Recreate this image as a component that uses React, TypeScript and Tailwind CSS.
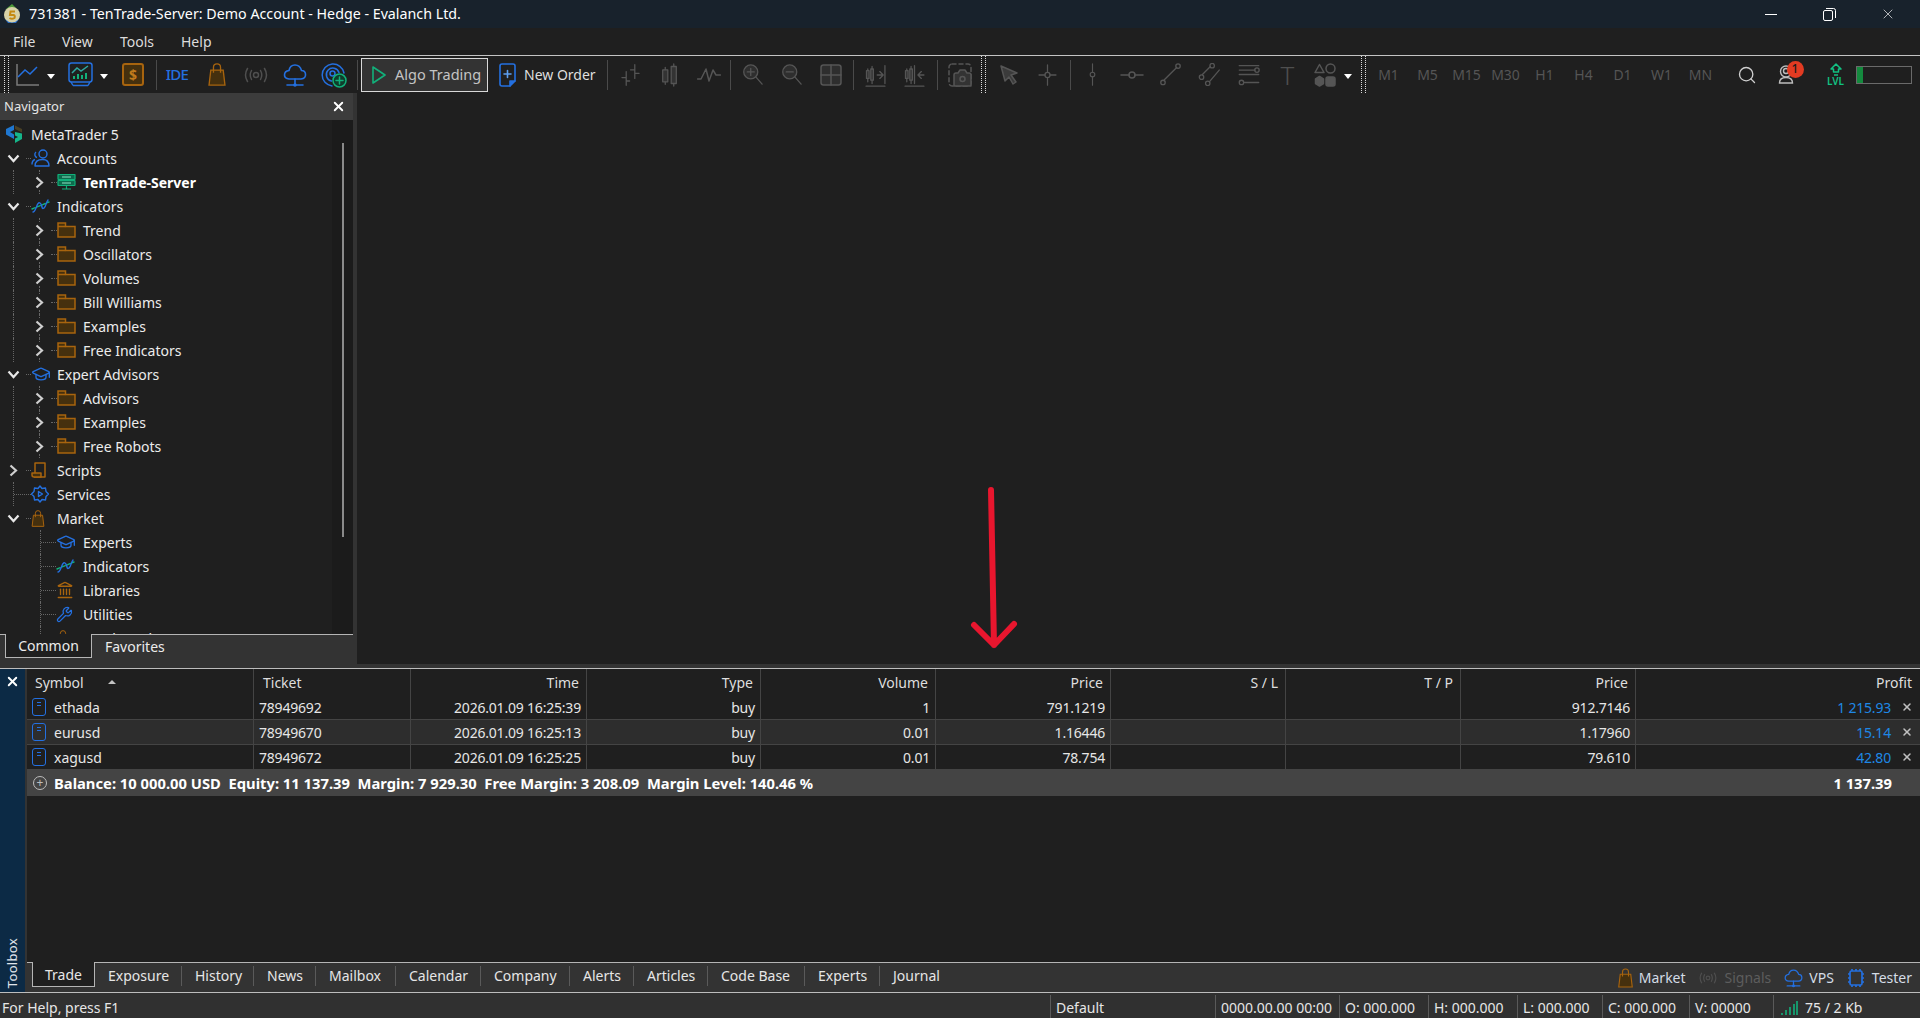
import type { ReactNode } from "react";
import { GraduationCap, Landmark, Search, Wrench, X } from "lucide-react";

const BLUE = "#2470e0";
const ORANGE = "#a8640e";
const ORANGE_FILL = "#45300e";
const GREEN = "#12b07a";
const GRAY = "#555555";

type IconProps = { w?: number; h?: number; c?: string };

function Svg({ w = 24, h = 24, vb = "0 0 24 24", c = GRAY, sw = 1.5, children }: IconProps & { vb?: string; sw?: number; children: ReactNode }) {
  return (
    <svg width={w} height={h} viewBox={vb} fill="none" stroke={c} strokeWidth={sw} strokeLinecap="round" strokeLinejoin="round">
      {children}
    </svg>
  );
}

function AppIcon() {
  return (
    <svg width="20" height="20" viewBox="0 0 20 20">
      <path d="M10 0 L15 5 L4 5 Z" fill="#4d9a3a" />
      <circle cx="10" cy="11" r="8" fill="#d8d2a8" />
      <path d="M3 15 Q10 22 17 15 L14 19 L6 19 Z" fill="#2a6fc9" />
      <path d="M13 7.5 H8.5 L8 11 H11.5 Q13.5 11.5 12.5 14 Q10 15.5 7.5 14" fill="none" stroke="#c58a12" strokeWidth="2" />
    </svg>
  );
}

function LineChartIcon() {
  return (
    <svg width="24" height="24" viewBox="0 0 24 24" fill="none" strokeWidth="1.5">
      <path d="M1 1 V22 H23" stroke="#7b7b7b" />
      <path d="M2 14 L9 7 L14 11 L21 4" stroke={BLUE} />
    </svg>
  );
}

function ChartBlueIcon() {
  return (
    <svg width="25" height="25" viewBox="0 0 25 25" fill="none" strokeWidth="1.5">
      <rect x="1" y="1" width="23" height="19" rx="2.5" stroke={BLUE} />
      <path d="M5 23.5 H20 M3 20 L5 23.5 M22 20 L20 23.5" stroke={BLUE} />
      <path d="M4 11 L9 6 L13 9 L20 4" stroke="#2fa9a0" />
      <path d="M6 17 V14 M10 17 V12 M14 17 V13 M18 17 V11" stroke={GREEN} strokeWidth="2" />
    </svg>
  );
}

function DollarIcon() {
  return (
    <div className="flex h-[23px] w-[22px] items-center justify-center rounded-[3px] border-2 border-[#a8640e] bg-[#45300e] text-[14px] font-bold leading-none text-[#c27a1c]">
      $
    </div>
  );
}

function BagIcon({ w = 18, h = 23 }: IconProps) {
  return (
    <svg width={w} height={h} viewBox="0 0 20 26" fill="none" stroke={ORANGE} strokeWidth="1.5">
      <path d="M3 8 H17 L19 25 H1 Z" fill={ORANGE_FILL} />
      <path d="M6 11 V5 Q6 1 10 1 Q14 1 14 5 V11" />
    </svg>
  );
}

function SignalIcon({ w = 24, h = 16, c = "#4f4f4f" }: IconProps) {
  return (
    <svg width={w} height={h} viewBox="0 0 24 16" fill="none" stroke={c} strokeWidth="1.5" strokeLinecap="round">
      <circle cx="12" cy="8" r="2.5" />
      <path d="M7.5 3.5 Q5 8 7.5 12.5 M16.5 3.5 Q19 8 16.5 12.5 M3.5 1.5 Q-0.5 8 3.5 14.5 M20.5 1.5 Q24.5 8 20.5 14.5" />
    </svg>
  );
}

function CloudIcon({ w = 24, h = 24 }: IconProps) {
  return (
    <svg width={w} height={h} viewBox="0 0 24 24" fill="none" stroke={BLUE} strokeWidth="1.6" strokeLinecap="round" strokeLinejoin="round">
      <path d="M6 16 H18 Q23 15.5 22.5 11 Q22 7.5 18.5 7.5 Q17 2 12 2 Q7 2 6 7.5 Q1.5 8 1.5 12 Q1.5 15.5 6 16 Z" />
      <path d="M12 16 V22 M4 22 H20" />
      <circle cx="12" cy="22" r="1" fill={BLUE} />
    </svg>
  );
}

function RadarIcon() {
  return (
    <svg width="26" height="26" viewBox="0 0 26 26" fill="none" strokeWidth="1.5" strokeLinecap="round">
      <path d="M11 24 A11 11 0 1 1 23 11" stroke={BLUE} />
      <path d="M10.5 19 A6.5 6.5 0 1 1 18 10.5" stroke={BLUE} />
      <circle cx="11.5" cy="11.5" r="2.5" stroke={BLUE} />
      <circle cx="18.5" cy="18.5" r="6.5" fill="#0f3d2c" stroke={GREEN} />
      <path d="M18.5 15 V22 M15 18.5 H22" stroke={GREEN} />
    </svg>
  );
}

function PlayIcon() {
  return (
    <svg width="14" height="18" viewBox="0 0 14 18" fill="none" stroke={GREEN} strokeWidth="1.6" strokeLinejoin="round">
      <path d="M1 1 L13 9 L1 17 Z" />
    </svg>
  );
}

function NewOrderIcon() {
  return (
    <svg width="17" height="24" viewBox="0 0 17 24" fill="none" stroke={BLUE} strokeWidth="1.6" strokeLinejoin="round" strokeLinecap="round">
      <path d="M3 1 H14 Q16 1 16 3 V18 L11 23 H3 Q1 23 1 21 V3 Q1 1 3 1 Z" />
      <path d="M11 23 V18 H16" fill={BLUE} />
      <path d="M8.5 7.5 V14.5 M5 11 H12" stroke="#5d9ff0" />
    </svg>
  );
}

function UserIcon() {
  return (
    <svg width="16" height="20" viewBox="0 0 16 20" fill="none" stroke="#bdbdbd" strokeWidth="1.4">
      <circle cx="8" cy="6.5" r="5.5" />
      <circle cx="8" cy="6" r="2.5" />
      <path d="M1.5 18 Q1.5 12.5 8 12.5 Q14.5 12.5 14.5 18 Z" />
    </svg>
  );
}

function LvlIcon() {
  return (
    <div className="flex flex-col items-center leading-none text-[#12c283]">
      <svg width="12" height="13" viewBox="0 0 12 13" fill="none" stroke="currentColor" strokeWidth="1.5" strokeLinejoin="round">
        <path d="M6 1 L11 6 H8.5 V9 H3.5 V6 H1 Z" />
        <path d="M4 12 H8" />
      </svg>
      <span className="text-[10px] font-semibold">LVL</span>
    </div>
  );
}

function FolderIcon() {
  return (
    <svg width="19" height="16" viewBox="0 0 19 16" fill={ORANGE_FILL} stroke={ORANGE} strokeWidth="1.5">
      <path d="M1 1 H8.5 V4.5 H18 V15 H1 Z" />
      <path d="M1 4.5 H8.5" />
    </svg>
  );
}

function AccountsIcon() {
  return (
    <svg width="19" height="18" viewBox="0 0 19 18" fill="none" stroke={BLUE} strokeWidth="1.4" strokeLinejoin="round">
      <circle cx="12" cy="5" r="4" />
      <path d="M6 8.5 A3.2 3.2 0 0 1 5 3" />
      <path d="M4 17 Q4 10.5 11.5 10.5 Q18 10.5 18 17 Z" />
      <path d="M1 15.5 Q1 11.5 4 10.5" />
    </svg>
  );
}

function ServerIcon() {
  return (
    <svg width="19" height="16" viewBox="0 0 19 16" strokeWidth="1.2">
      <rect x="1" y="0.5" width="17" height="5" rx="0.5" fill="#0d6c4d" stroke={GREEN} />
      <rect x="1" y="6.5" width="17" height="5" rx="0.5" fill="#0d6c4d" stroke={GREEN} />
      <path d="M5 3 H14 M5 9 H14" stroke="#8fe0c3" strokeWidth="1" />
      <path d="M9.5 11.5 V14.5 M5 15 H14" stroke={GREEN} />
    </svg>
  );
}

function IndicatorIcon() {
  return (
    <svg width="19" height="16" viewBox="0 0 19 16" fill="none" strokeWidth="1.4" strokeLinecap="round">
      <path d="M1 11 L18 4" stroke={GREEN} strokeDasharray="3.5 2" />
      <path d="M2 14 C5 14 6 3 9 5 C12 7 10 12 13 10 C15 9 15 4 17 2" stroke={BLUE} />
    </svg>
  );
}

function ScriptIcon() {
  return (
    <svg width="15" height="16" viewBox="0 0 15 16" fill="none" stroke={ORANGE} strokeWidth="1.5" strokeLinejoin="round">
      <path d="M4 11 V1 H14 V15 H3" />
      <path d="M1 11 H10 V15 H3 Q1 15 1 13 Z" fill={ORANGE_FILL} />
    </svg>
  );
}

function ServicesIcon() {
  return (
    <svg width="18" height="18" viewBox="0 0 18 18" fill="none" stroke={BLUE} strokeWidth="1.4" strokeLinejoin="round">
      <path d="M9 1 L11 3.5 L14.5 3 L15 6.5 L17.5 9 L15 11.5 L14.5 15 L11 14.5 L9 17 L7 14.5 L3.5 15 L3 11.5 L0.5 9 L3 6.5 L3.5 3 L7 3.5 Z" />
      <path d="M7.5 6.5 L11.5 9 L7.5 11.5 Z" />
    </svg>
  );
}

function LogoIcon() {
  return (
    <svg width="18" height="18" viewBox="0 0 18 18">
      <path d="M1 4 L9 0 V5 L5 7 L9 9.5 V14 L1 9.5 Z" fill="#1f77d0" />
      <path d="M10 0.5 L17 4 V7.5 L10 4 Z" fill="#4a4024" />
      <path d="M17 8.5 V14 L10 18 V13.5 L13 12 L10 10.5 V7 Z" fill="#16b58a" />
    </svg>
  );
}

function TradeDoc() {
  return (
    <div className="flex h-[18px] w-[14px] flex-col items-center gap-[2px] rounded-[3px] border-[1.5px] border-[#2470e0] pt-[3px]">
      <div className="h-px w-[4px] bg-[#2470e0]" />
      <div className="h-px w-[4px] bg-[#2470e0]" />
    </div>
  );
}

function ChipIcon() {
  return (
    <svg width="18" height="20" viewBox="0 0 18 20" fill="none" stroke={BLUE} strokeWidth="1.7">
      <rect x="3" y="3" width="12" height="14" rx="1.5" />
      <path d="M5 1 V3 M9 1 V3 M13 1 V3 M5 17 V19 M9 17 V19 M13 17 V19 M1 6 H3 M1 10 H3 M1 14 H3 M15 6 H17 M15 10 H17 M15 14 H17" />
    </svg>
  );
}

function RightChev() {
  return (
    <svg width="9" height="13" viewBox="0 0 9 13" fill="none" stroke="#cfcfcf" strokeWidth="2.2">
      <path d="M1.5 1.5 L7 6.5 L1.5 11.5" />
    </svg>
  );
}

function DownChev() {
  return (
    <svg width="13" height="9" viewBox="0 0 13 9" fill="none" stroke="#e8e8e8" strokeWidth="2.2">
      <path d="M1.5 1.5 L6.5 7 L11.5 1.5" />
    </svg>
  );
}

function Caret({ className }: { className: string }) {
  return (
    <div className={`flex h-full items-center justify-center ${className}`}>
      <div className="mt-[3px] h-0 w-0 border-x-[4px] border-t-[5px] border-x-transparent border-t-white" />
    </div>
  );
}

function Grip({ className }: { className: string }) {
  return <div className={`h-full w-[5px] border-x border-dotted border-[#dddddd] ${className}`} />;
}

function Sep({ className }: { className: string }) {
  return <div className={`h-[30px] w-px bg-[#4a4a4a] ${className}`} />;
}

function Cell({ className = "w-[39px]", children }: { className?: string; children: ReactNode }) {
  return <div className={`flex h-full shrink-0 items-center justify-center ${className}`}>{children}</div>;
}

function Toolbar() {
  return (
    <div className="flex h-[37px] items-center bg-[#1f1f1f]">
      <Grip className="ml-[4px]" />
      <Cell className="w-[38px]"><LineChartIcon /></Cell>
      <Caret className="w-[8px]" />
      <Cell className="ml-[7px] w-[36px]"><ChartBlueIcon /></Cell>
      <Caret className="w-[8px] ml-[2px]" />
      <Cell className="ml-[6px] w-[38px]"><DollarIcon /></Cell>
      <Sep className="ml-[4px]" />
      <Cell className="w-[40px]"><span className="text-[15px] font-medium tracking-tighter text-[#2470e0]">IDE</span></Cell>
      <Cell><BagIcon /></Cell>
      <Cell><SignalIcon /></Cell>
      <Cell><CloudIcon /></Cell>
      <Cell className="w-[40px]"><RadarIcon /></Cell>
      <Sep className="ml-[3px]" />
      <div className="ml-[3px] flex h-[34px] w-[127px] items-center border border-[#d8d8d8] bg-[#333333] pl-[10px]">
        <PlayIcon />
        <span className="ml-[9px] whitespace-nowrap text-[14.5px] text-[#c4c4c4]">Algo Trading</span>
      </div>
      <div className="ml-[11px] flex w-[108px] items-center">
        <NewOrderIcon />
        <span className="ml-[8px] whitespace-nowrap text-[14px] text-[#dedede]">New Order</span>
      </div>
      <Sep className="" />
      <Cell className="ml-[3px] w-[39px]">
        <Svg w={19} h={24} vb="0 0 22 28"><path d="M6 10 V26 M1 17 H6 M6 21 H10 M16 2 V18 M11 8 H16 M16 12 H21" /></Svg>
      </Cell>
      <Cell>
        <Svg w={17} h={24} vb="0 0 20 28">
          <path d="M5 5 V8 M5 22 V25 M15 1 V4 M15 24 V27" />
          <rect x="2" y="8" width="6" height="14" fill="#333" />
          <rect x="12" y="4" width="6" height="20" fill="#333" />
        </Svg>
      </Cell>
      <Cell>
        <Svg w={24} h={18} vb="0 0 24 18"><path d="M0.5 13 H4 L9 3 L12 15 L16 4 L19 9 H23.5" /></Svg>
      </Cell>
      <Sep className="ml-[2px]" />
      <Cell className="ml-[2px] w-[39px]">
        <Svg w={21} h={23} vb="0 0 24 26"><circle cx="10" cy="10" r="8" fill="#2e2e2e" /><path d="M10 6 V14 M6 10 H14 M16 16 L23 24" /></Svg>
      </Cell>
      <Cell>
        <Svg w={21} h={23} vb="0 0 24 26"><circle cx="10" cy="10" r="8" fill="#2e2e2e" /><path d="M6 10 H14 M16 16 L23 24" /></Svg>
      </Cell>
      <Cell>
        <Svg w={22} h={22} vb="0 0 22 22"><rect x="1" y="1" width="20" height="20" rx="2.5" fill="#2e2e2e" /><path d="M11 1 V21 M1 11 H21" /></Svg>
      </Cell>
      <Sep className="ml-[3px]" />
      <Cell className="ml-[2px] w-[39px]">
        <Svg w={23} h={24} vb="0 0 24 28">
          <path d="M3 7 V22 M8 4 V24 M23 3 V24 M1 27 H23 M14 14 H21 M17 10 L21 14 L17 18" />
          <rect x="1.5" y="9" width="3" height="9" fill="#333" />
          <rect x="6.5" y="7" width="3" height="13" fill="#333" />
        </Svg>
      </Cell>
      <Cell>
        <Svg w={23} h={24} vb="0 0 24 28">
          <path d="M3 7 V22 M8 4 V24 M12 3 V24 M1 27 H23 M16 14 H23 M20 10 L16 14 L20 18" />
          <rect x="1.5" y="9" width="3" height="9" fill="#333" />
          <rect x="6.5" y="7" width="3" height="13" fill="#333" />
        </Svg>
      </Cell>
      <Sep className="ml-[3px]" />
      <Cell className="ml-[2px] w-[39px]">
        <Svg w={24} h={24} vb="0 0 24 24">
          <rect x="1" y="1" width="22" height="22" rx="3" strokeDasharray="4 3" />
          <path d="M6 23 V12 Q6 10 8 10 H10 L12 7 H17 L19 10 H21 Q23 10 23 12 V23 Z" fill="#333" />
          <circle cx="14.5" cy="16" r="2.5" />
        </Svg>
      </Cell>
      <Grip className="ml-[2px]" />
      <Cell className="ml-[3px] w-[39px]">
        <Svg w={18} h={20} vb="0 0 18 20"><path d="M1 1 L17 8 L11 10 L16 17 L13 19 L9 12 L5 16 Z" fill="#3b3b3b" /></Svg>
      </Cell>
      <Cell>
        <Svg w={21} h={22} vb="0 0 22 26"><path d="M11 1 V10 M11 16 V25 M1 13 H8 M14 13 H21" /><circle cx="11" cy="13" r="3" /></Svg>
      </Cell>
      <Sep className="ml-[3px]" />
      <Cell className="ml-[2px] w-[39px]">
        <Svg w={7} h={23} vb="0 0 8 30"><path d="M4 1 V12 M4 18 V29" /><circle cx="4" cy="15" r="3" /></Svg>
      </Cell>
      <Cell>
        <Svg w={24} h={8} vb="0 0 24 8"><path d="M1 4 H9 M15 4 H23" /><circle cx="12" cy="4" r="3" /></Svg>
      </Cell>
      <Cell>
        <Svg w={23} h={23} vb="0 0 24 26"><path d="M5 19 L19 5" /><circle cx="3.5" cy="22" r="2.5" /><circle cx="20.5" cy="3.5" r="2.5" /></Svg>
      </Cell>
      <Cell>
        <Svg w={23} h={23} vb="0 0 24 26"><path d="M4 13 L13 4 M12 21 L23 8" /><circle cx="3" cy="16" r="2.5" /><circle cx="15" cy="3" r="2.5" /><circle cx="10" cy="23" r="2.5" /></Svg>
      </Cell>
      <Cell>
        <Svg w={24} h={23} vb="0 0 24 26"><path d="M1 3 H23 M1 8 H19 M1 13 H23 M7 22 H23" /><circle cx="21" cy="8" r="2.5" /><circle cx="3.5" cy="22" r="2.5" /></Svg>
      </Cell>
      <Cell><span className="text-[26px] font-light leading-none text-[#4f4f4f]">T</span></Cell>
      <Cell className="w-[36px]">
        <Svg w={22} h={24} vb="0 0 22 24">
          <path d="M5.5 1.5 L10 9.5 H1 Z" />
          <circle cx="16.5" cy="5.5" r="4.5" />
          <path d="M5.5 13.5 L9.5 16 V20.5 L5.5 23 L1.5 20.5 V16 Z" fill="#555" />
          <rect x="12" y="14" width="9" height="9" rx="2" fill="#555" />
        </Svg>
      </Cell>
      <Caret className="w-[10px]" />
      <Grip className="ml-[8px]" />
      <div className="ml-[3px] flex h-full">
        {["M1", "M5", "M15", "M30", "H1", "H4", "D1", "W1", "MN"].map((t) => (
          <Cell key={t}><span className="text-[14px] text-[#555555]">{t}</span></Cell>
        ))}
      </div>
      <Cell className="ml-[7px] w-[39px]"><Search size={20} color="#d0d0d0" strokeWidth={1.6} /></Cell>
      <Cell>
        <div className="relative flex">
          <UserIcon />
          <div className="absolute -right-[10px] -top-[4px] flex h-[17px] w-[17px] items-center justify-center rounded-full bg-[#e23b22] text-[12px] font-medium leading-none text-[#1a1a1a]">
            1
          </div>
        </div>
      </Cell>
      <Cell className="ml-[11px] w-[39px]"><LvlIcon /></Cell>
      <div className="ml-[1px] h-[18px] w-[56px] border border-[#6a6a6a]">
        <div className="h-full w-[6px] bg-[#148a3e]" />
      </div>
    </div>
  );
}

type Row = { label: string; icon: ReactNode; bold?: boolean };

function Label({ row }: { row: Row }) {
  return <span className={`whitespace-nowrap text-[14px] text-[#ececec] ${row.bold ? "font-bold text-white" : ""}`}>{row.label}</span>;
}

function TopRow({ row, open, closed, tail }: { row: Row; open?: boolean; closed?: boolean; tail?: boolean }) {
  return (
    <div className="flex h-6 items-center">
      {tail ? (
        <div className="h-full w-[14px] border-r border-dotted border-[#666666]" />
      ) : (
        <div className="flex w-[26px] items-center justify-center">{open ? <DownChev /> : closed ? <RightChev /> : null}</div>
      )}
      {tail ? <div className="w-[17px] border-t border-dotted border-[#666666]" /> : <div className="w-[5px] border-t border-dotted border-[#666666]" />}
      <div className="flex w-[26px] items-center">{row.icon}</div>
      <Label row={row} />
    </div>
  );
}

function SubRow({ row, guide = true }: { row: Row; guide?: boolean }) {
  return (
    <div className="flex h-6 items-center">
      <div className="h-full w-[27px]">{guide && <div className="h-full w-[14px] border-r border-dotted border-[#666666]" />}</div>
      <div className="flex h-full w-[24px] flex-col items-center justify-between">
        <div className="h-[4px] border-l border-dotted border-[#666666]" />
        <RightChev />
        <div className="h-[4px] border-l border-dotted border-[#666666]" />
      </div>
      <div className="w-[6px] border-t border-dotted border-[#666666]" />
      <div className="flex w-[26px] items-center">{row.icon}</div>
      <Label row={row} />
    </div>
  );
}

function LeafRow({ row }: { row: Row }) {
  return (
    <div className="flex h-6 items-center">
      <div className="h-full w-[41px] border-r border-dotted border-[#666666]" />
      <div className="w-[15px] border-t border-dotted border-[#666666]" />
      <div className="flex w-[27px] items-center">{row.icon}</div>
      <Label row={row} />
    </div>
  );
}

function folder(label: string): Row {
  return { label, icon: <FolderIcon /> };
}

function Navigator() {
  return (
    <div className="flex h-full w-[357px] shrink-0 flex-col bg-[#333333]">
      <div className="flex h-[27px] w-[353px] shrink-0 items-center justify-between bg-[#3c3c3c] pl-[4px] pr-[7px]">
        <span className="text-[13px] text-[#e4e4e4]">Navigator</span>
        <X size={15} color="#ffffff" strokeWidth={3} />
      </div>
      <div className="flex h-[514px] w-[353px] shrink-0 bg-[#1f1f1f]">
        <div className="h-full w-[332px] overflow-hidden pt-[2px]">
          <div className="flex h-6 items-center pl-[5px]">
            <div className="w-[26px]"><LogoIcon /></div>
            <span className="text-[14px] text-[#ececec]">MetaTrader 5</span>
          </div>
          <TopRow open row={{ label: "Accounts", icon: <AccountsIcon /> }} />
          <SubRow row={{ label: "TenTrade-Server", icon: <ServerIcon />, bold: true }} />
          <TopRow open row={{ label: "Indicators", icon: <IndicatorIcon /> }} />
          {["Trend", "Oscillators", "Volumes", "Bill Williams", "Examples", "Free Indicators"].map((l, i) => (
            <SubRow key={i} row={folder(l)} />
          ))}
          <TopRow open row={{ label: "Expert Advisors", icon: <GraduationCap size={20} color={BLUE} strokeWidth={1.6} /> }} />
          {["Advisors", "Examples", "Free Robots"].map((l, i) => (
            <SubRow key={i} row={folder(l)} />
          ))}
          <TopRow closed row={{ label: "Scripts", icon: <ScriptIcon /> }} />
          <TopRow tail row={{ label: "Services", icon: <ServicesIcon /> }} />
          <TopRow open row={{ label: "Market", icon: <BagIcon w={14} h={17} /> }} />
          <LeafRow row={{ label: "Experts", icon: <GraduationCap size={20} color={BLUE} strokeWidth={1.6} /> }} />
          <LeafRow row={{ label: "Indicators", icon: <IndicatorIcon /> }} />
          <LeafRow row={{ label: "Libraries", icon: <Landmark size={18} color={ORANGE} strokeWidth={1.8} /> }} />
          <LeafRow row={{ label: "Utilities", icon: <Wrench size={17} color={BLUE} strokeWidth={1.8} /> }} />
          <LeafRow row={{ label: "Purchased", icon: <BagIcon w={14} h={17} /> }} />
        </div>
        <div className="flex h-full w-[21px] justify-center bg-[#1b1b1b] pl-[1px] pt-[23px]">
          <div className="h-[394px] w-[2px] bg-[#8a8a8a]" />
        </div>
      </div>
      <div className="flex h-[24px] w-[353px] shrink-0">
        <div className="w-[5px] border-t border-[#b5b5b5]" />
        <div className="flex w-[87px] items-center justify-center border-x border-b border-[#b5b5b5] bg-[#1f1f1f] text-[14px] text-[#ececec]">Common</div>
        <div className="flex flex-1 items-center border-t border-[#b5b5b5] pl-[13px] text-[14px] text-[#ececec]">Favorites</div>
      </div>
    </div>
  );
}

const COLS = "grid grid-cols-[227px_157px_176px_174px_175px_175px_175px_175px_175px_1fr]";

function TradeRow({ sym, ticket, time, vol, price, cur, profit, alt }: { sym: string; ticket: string; time: string; vol: string; price: string; cur: string; profit: string; alt?: boolean }) {
  const cell = "flex h-full items-center justify-end border-r border-[#444444] pr-[5px] tracking-[-0.2px]";
  return (
    <div className={`${COLS} h-[25px] border-b border-[#444444] text-[14px] text-[#e6e6e6] ${alt ? "bg-[#2d2d2d]" : "bg-[#1f1f1f]"}`}>
      <div className="flex h-full items-center border-r border-[#444444] pl-[5px]">
        <TradeDoc />
        <span className="ml-[8px]">{sym}</span>
      </div>
      <div className="flex h-full items-center border-r border-[#444444] pl-[5px] tracking-[-0.2px]">{ticket}</div>
      <div className={cell}>{time}</div>
      <div className={cell}>buy</div>
      <div className={cell}>{vol}</div>
      <div className={cell}>{price}</div>
      <div className={cell} />
      <div className={cell} />
      <div className={cell}>{cur}</div>
      <div className="flex h-full items-center justify-end pr-[7px] tracking-[-0.2px]">
        <span className="text-[#1e88e5]">{profit}</span>
        <X size={12} color="#c0c0c0" strokeWidth={3} className="ml-[10px]" />
      </div>
    </div>
  );
}

function TradeTable() {
  const head = "flex h-full items-center justify-end border-r border-[#444444] pr-[7px]";
  return (
    <div className="flex-1 bg-[#1f1f1f]">
      <div className={`${COLS} h-[26px] text-[14px] text-[#dedede]`}>
        <div className="flex h-full items-center border-r border-[#444444] pl-[8px]">
          <span>Symbol</span>
          <div className="ml-[24px] h-0 w-0 border-x-[4px] border-b-[4px] border-x-transparent border-b-[#c4c4c4]" />
        </div>
        <div className="flex h-full items-center border-r border-[#444444] pl-[9px]">Ticket</div>
        <div className={head}>Time</div>
        <div className={head}>Type</div>
        <div className={head}>Volume</div>
        <div className={head}>Price</div>
        <div className={head}>S / L</div>
        <div className={head}>T / P</div>
        <div className={head}>Price</div>
        <div className="flex h-full items-center justify-end pr-[8px]">Profit</div>
      </div>
      <TradeRow sym="ethada" ticket="78949692" time="2026.01.09 16:25:39" vol="1" price="791.1219" cur="912.7146" profit="1 215.93" />
      <TradeRow alt sym="eurusd" ticket="78949670" time="2026.01.09 16:25:13" vol="0.01" price="1.16446" cur="1.17960" profit="15.14" />
      <TradeRow sym="xagusd" ticket="78949672" time="2026.01.09 16:25:25" vol="0.01" price="78.754" cur="79.610" profit="42.80" />
      <div className="flex h-[26px] items-center bg-[#444444] pr-[28px] text-[14.75px] font-bold text-white">
        <div className="ml-[6px] flex h-[14px] w-[14px] items-center justify-center rounded-full border border-[#bdbdbd] text-[12px] font-normal leading-none text-[#bdbdbd]">+</div>
        <span className="ml-[7px] whitespace-pre">Balance: 10 000.00 USD  Equity: 11 137.39  Margin: 7 929.30  Free Margin: 3 208.09  Margin Level: 140.46 %</span>
        <span className="ml-auto">1 137.39</span>
      </div>
    </div>
  );
}

const TABS = [
  { t: "Exposure", w: "w-[87px]" },
  { t: "History", w: "w-[72px]" },
  { t: "News", w: "w-[62px]" },
  { t: "Mailbox", w: "w-[80px]" },
  { t: "Calendar", w: "w-[85px]" },
  { t: "Company", w: "w-[89px]" },
  { t: "Alerts", w: "w-[64px]" },
  { t: "Articles", w: "w-[74px]" },
  { t: "Code Base", w: "w-[97px]" },
  { t: "Experts", w: "w-[75px]" },
];

function ToolTabs() {
  return (
    <div className="flex h-[30px] shrink-0 bg-[#333333] text-[14px] text-[#e6e6e6]">
      <div className="w-[5px] border-t border-[#b5b5b5]" />
      <div className="flex h-[25px] w-[63px] items-center justify-center border-x border-b border-[#b5b5b5] bg-[#1f1f1f]">Trade</div>
      <div className="flex flex-1 items-center border-t border-[#b5b5b5]">
        <div className="mb-[4px] flex items-center">
          {TABS.map((x) => (
            <div key={x.t} className={`flex h-[20px] items-center whitespace-nowrap border-r border-[#5a5a5a] pl-[13px] ${x.w}`}>{x.t}</div>
          ))}
          <div className="pl-[13px]">Journal</div>
        </div>
        <div className="ml-auto flex items-center pr-[8px]">
          <BagIcon w={15} h={20} />
          <span className="ml-[6px] text-[#d4dce6]">Market</span>
          <div className="ml-[13px]"><SignalIcon w={18} h={12} /></div>
          <span className="ml-[8px] text-[#5d5d5d]">Signals</span>
          <div className="ml-[13px]"><CloudIcon w={19} h={20} /></div>
          <span className="ml-[6px] text-[#d4dce6]">VPS</span>
          <div className="ml-[13px]"><ChipIcon /></div>
          <span className="ml-[7px] text-[#d4dce6]">Tester</span>
        </div>
      </div>
    </div>
  );
}

const STATUS = [
  { t: "Default", w: "w-[165px]" },
  { t: "0000.00.00 00:00", w: "w-[124px]" },
  { t: "O: 000.000", w: "w-[89px]" },
  { t: "H: 000.000", w: "w-[89px]" },
  { t: "L: 000.000", w: "w-[85px]" },
  { t: "C: 000.000", w: "w-[87px]" },
  { t: "V: 00000", w: "w-[84px]" },
];

function StatusBar() {
  return (
    <div className="flex h-[25px] items-end bg-[#303030] text-[14px] text-[#e6e6e6]">
      <div className="flex h-[23px] flex-1 items-center pl-[2px] pt-[2px]">For Help, press F1</div>
      {STATUS.map((s) => (
        <div key={s.t} className={`flex h-[23px] items-center whitespace-nowrap border-l border-[#5a5a5a] pl-[5px] pt-[2px] ${s.w}`}>{s.t}</div>
      ))}
      <div className="flex h-[23px] w-[147px] items-center border-l border-[#5a5a5a] pl-[7px] pt-[2px]">
        <svg width="17" height="16" viewBox="0 0 17 16" fill="none" stroke={GREEN} strokeWidth="1.6">
          <path d="M1 15 V13 M5 15 V10 M9 15 V7 M13 15 V4 M16 15 V1" />
        </svg>
        <span className="ml-[7px]">75 / 2 Kb</span>
      </div>
    </div>
  );
}

export default function App() {
  return (
    <div className="relative flex h-[1018px] w-[1920px] flex-col overflow-hidden bg-[#1f1f1f] font-['Noto_Sans',sans-serif]">
      <div className="flex h-[28px] shrink-0 items-center bg-[#18222c] pl-[2px] text-white">
        <AppIcon />
        <span className="ml-[7px] text-[14.25px]">731381 - TenTrade-Server: Demo Account - Hedge - Evalanch Ltd.</span>
        <div className="ml-auto flex items-center">
          <div className="flex w-[62px] justify-center"><div className="h-px w-[12px] bg-white" /></div>
          <div className="flex w-[54px] justify-center">
            <svg width="13" height="13" viewBox="0 0 13 13" fill="none" stroke="white" strokeWidth="1">
              <rect x="0.5" y="2.5" width="9" height="10" rx="1.5" />
              <path d="M3 0.5 H10.5 Q12.5 0.5 12.5 2.5 V10" />
            </svg>
          </div>
          <div className="flex w-[64px] justify-center"><X size={16} color="white" strokeWidth={1} /></div>
        </div>
      </div>
      <div className="flex h-[27px] shrink-0 items-center bg-[#1f1f1f] pl-[13px] text-[14px] text-[#dcdcdc]">
        <span className="w-[49px]">File</span>
        <span className="w-[58px]">View</span>
        <span className="w-[61px]">Tools</span>
        <span>Help</span>
      </div>
      <div className="h-px shrink-0 bg-[#c4c4c4]" />
      <Toolbar />
      <div className="flex h-[575px] shrink-0">
        <Navigator />
        <div className="flex flex-1 flex-col bg-[#333333]">
          <div className="h-[571px] bg-[#1f1f1f]" />
        </div>
      </div>
      <div className="h-px shrink-0 bg-[#bdbdbd]" />
      <div className="flex h-[323px] shrink-0 bg-[#333333]">
        <div className="flex w-[25px] flex-col items-center justify-between bg-[#0c2a45] pb-[4px] pt-[5px]">
          <X size={15} color="#ffffff" strokeWidth={3} />
          <span className="rotate-180 text-[13px] tracking-wide text-[#e0e6ec] [writing-mode:vertical-rl]">Toolbox</span>
        </div>
        <div className="ml-[2px] flex flex-1 flex-col">
          <TradeTable />
          <ToolTabs />
        </div>
      </div>
      <div className="h-px shrink-0 bg-[#bdbdbd]" />
      <StatusBar />
      <svg className="pointer-events-none absolute left-[960px] top-[480px]" width="70" height="180" viewBox="0 0 70 180" fill="none" stroke="#e8162e" strokeWidth="6" strokeLinecap="round" strokeLinejoin="round">
        <path d="M31 10 L34 165 M14 145 L34 165 L54 144" />
      </svg>
    </div>
  );
}
